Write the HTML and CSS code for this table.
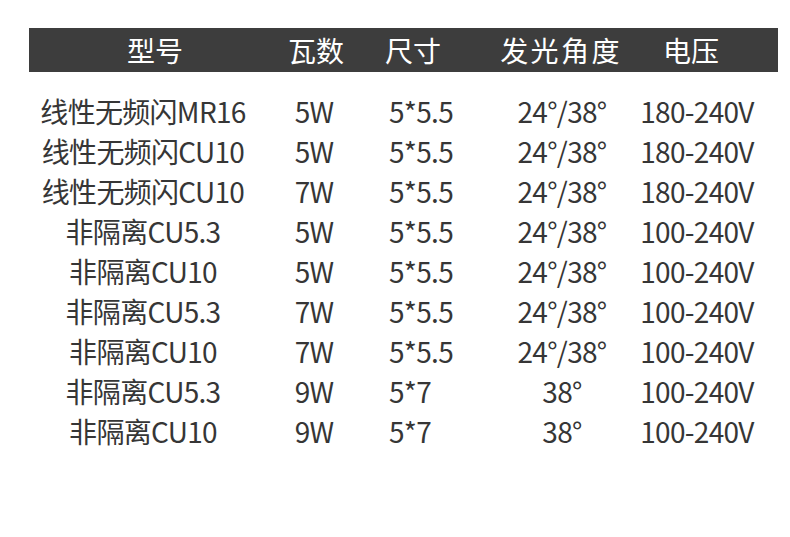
FILE: index.html
```html
<!DOCTYPE html>
<html lang="zh">
<head>
<meta charset="utf-8">
<link rel="stylesheet" href="styles.css">
</head>
<body>
<div class="sheet">
  <div class="head">
    <div class="h1">型号</div>
    <div class="h2">瓦数</div>
    <div class="h3">尺寸</div>
    <div class="h4">发光角度</div>
    <div class="h5">电压</div>
  </div>
  <div class="rows">
    <div class="row"><span class="c1">线性无频闪MR16</span><span class="c2">5W</span><span class="c3">5*5.5</span><span class="c4">24°/38°</span><span class="c5">180-240V</span></div>
    <div class="row"><span class="c1">线性无频闪CU10</span><span class="c2">5W</span><span class="c3">5*5.5</span><span class="c4">24°/38°</span><span class="c5">180-240V</span></div>
    <div class="row"><span class="c1">线性无频闪CU10</span><span class="c2">7W</span><span class="c3">5*5.5</span><span class="c4">24°/38°</span><span class="c5">180-240V</span></div>
    <div class="row"><span class="c1">非隔离CU5.3</span><span class="c2">5W</span><span class="c3">5*5.5</span><span class="c4">24°/38°</span><span class="c5">100-240V</span></div>
    <div class="row"><span class="c1">非隔离CU10</span><span class="c2">5W</span><span class="c3">5*5.5</span><span class="c4">24°/38°</span><span class="c5">100-240V</span></div>
    <div class="row"><span class="c1">非隔离CU5.3</span><span class="c2">7W</span><span class="c3">5*5.5</span><span class="c4">24°/38°</span><span class="c5">100-240V</span></div>
    <div class="row"><span class="c1">非隔离CU10</span><span class="c2">7W</span><span class="c3">5*5.5</span><span class="c4">24°/38°</span><span class="c5">100-240V</span></div>
    <div class="row"><span class="c1">非隔离CU5.3</span><span class="c2">9W</span><span class="c3">5*7</span><span class="c4">38°</span><span class="c5">100-240V</span></div>
    <div class="row"><span class="c1">非隔离CU10</span><span class="c2">9W</span><span class="c3">5*7</span><span class="c4">38°</span><span class="c5">100-240V</span></div>
  </div>
</div>
</body>
</html>
```

FILE: styles.css
```css
html, body {
  margin: 0;
  padding: 0;
  background: #ffffff;
}
body {
  width: 790px;
  height: 537px;
  overflow: hidden;
  font-family: "Noto Sans CJK SC", "Noto Sans", sans-serif;
}
.sheet {
  padding: 28px 0 0 29px;
}
.head {
  width: 749px;
  height: 44px;
  background: #3d3d3d;
  color: #ffffff;
  font-size: 28px;
  line-height: 44px;
  display: grid;
  grid-template-columns: 252px 70px 124px 170px 92px;
}
.head > div {
  text-align: center;
  white-space: nowrap;
  display: flex;
  justify-content: center;
}
.head > .h4 {
  letter-spacing: 2.4px;
  padding-left: 2px;
}
.rows {
  margin-top: 19px;
  color: #363636;
  font-size: 28px;
  letter-spacing: -0.7px;
}
.row {
  height: 40px;
  line-height: 40px;
  display: grid;
  grid-template-columns: 228px 114px 116px 150px 120px;
}
.row > span {
  white-space: nowrap;
  display: flex;
  justify-content: center;
}
.row > .c3 {
  justify-content: flex-start;
  padding-left: 18px;
}
```
